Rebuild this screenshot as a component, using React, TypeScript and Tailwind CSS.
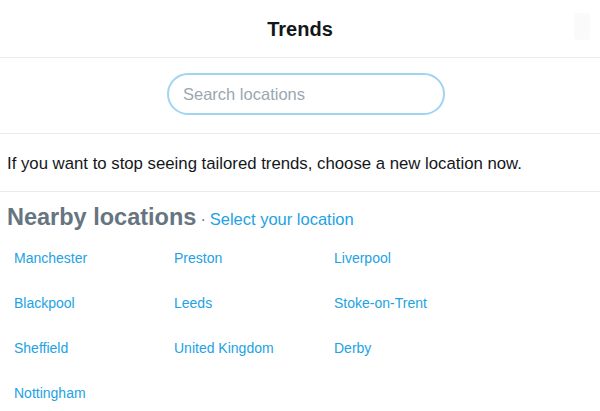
const locations = [
  "Manchester",
  "Preston",
  "Liverpool",
  "Blackpool",
  "Leeds",
  "Stoke-on-Trent",
  "Sheffield",
  "United Kingdom",
  "Derby",
  "Nottingham",
];

export default function App() {
  return (
    <div
      className="w-[600px] h-[411px] overflow-hidden bg-white"
      style={{ fontFamily: '"Liberation Sans", Arial, sans-serif' }}
    >
      <header className="relative h-[58px] flex items-center justify-center border-b border-[#e6ecf0]">
        <h1 className="text-[20px] font-bold text-[#14171a]">Trends</h1>
        <span className="absolute right-[10px] top-[13px] h-[27px] w-[16px] rounded-sm bg-[#fafafa]" />
      </header>

      <div className="flex justify-center pl-[12px] pt-[15px] pb-[18px] border-b border-[#e6ecf0]">
        <input
          type="text"
          placeholder="Search locations"
          className="w-[278px] h-[42px] rounded-full border-2 border-[#9fd4f2] px-[14px] text-[16.5px] text-[#14171a] placeholder:text-[#9aa7b2] outline-none"
        />
      </div>

      <p className="h-[58px] flex items-center px-[7px] pt-[2px] text-[16.75px] text-[#14171a] border-b border-[#e6ecf0]">
        If you want to stop seeing tailored trends, choose a new location now.
      </p>

      <div className="px-[7px] pt-[8px] flex items-baseline">
        <h2 className="text-[23.5px] font-bold text-[#66757f]">Nearby locations</h2>
        <span className="mx-[4px] text-[16px] text-[#66757f]">·</span>
        <a className="text-[16.5px] text-[#22a2e4]" href="#">
          Select your location
        </a>
      </div>

      <ul className="grid grid-cols-[160px_160px_160px] px-[14px] pt-[1px]">
        {locations.map((l) => (
          <li key={l} className="h-[45px] flex items-center">
            <a href="#" className="text-[14px] text-[#22a2e4]">
              {l}
            </a>
          </li>
        ))}
      </ul>
    </div>
  );
}
